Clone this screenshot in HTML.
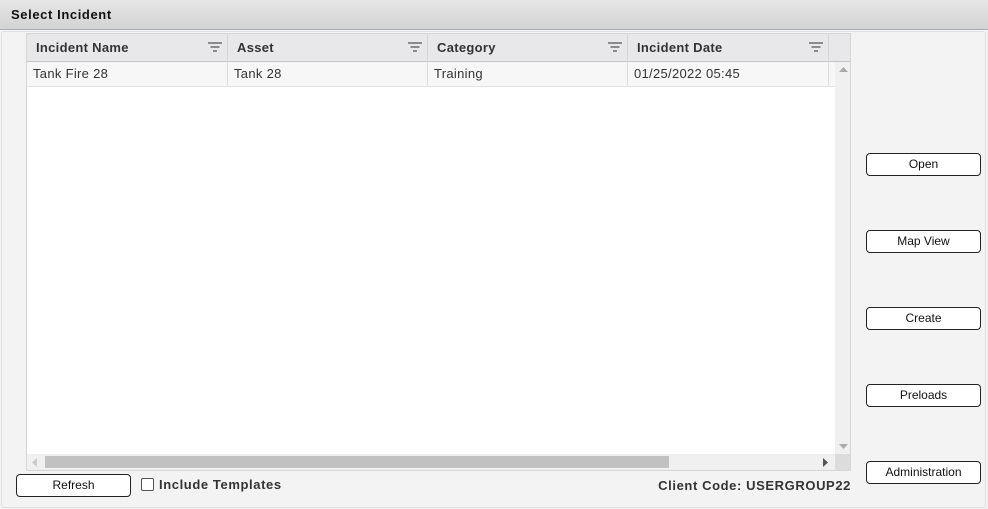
<!DOCTYPE html>
<html><head><style>
*{box-sizing:border-box;margin:0;padding:0}
body{width:988px;height:509px;background:#f3f3f3;font-family:"Liberation Sans",Verdana,sans-serif;position:relative;overflow:hidden;color:#222}
.hdr{position:absolute;left:0;top:0;width:988px;height:30px;background:linear-gradient(#e6e6e6,#d3d3d3);border-bottom:1px solid #a9adb5}
.hdr span{position:absolute;left:11px;top:7px;font-size:13px;font-weight:bold;color:#111;letter-spacing:0.6px}
.panel{position:absolute;left:1px;top:31px;width:985px;height:477px;border:1px solid #e0e0e0;border-radius:3px;background:#f3f3f3}
.grid{position:absolute;left:26px;top:33px;width:825px;height:438px;background:#fff;border:1px solid #d6d6d6;overflow:hidden}
.gh{position:absolute;left:0;top:0;width:825px;height:28px;background:#e8e8eb;border-bottom:1px solid #c4c4c8}
.gh div{position:absolute;top:0;height:28px;border-right:1px solid #d4d4d8;font-size:13px;font-weight:bold;line-height:27px;padding-left:9px;color:#333;letter-spacing:0.3px}
.fi{position:absolute;right:5px;top:8px;width:14px;height:10px}
.row{position:absolute;left:0;top:28px;width:808px;height:25px;background:#f7f7f7;border-bottom:1px solid #e4e4e4}
.row div{position:absolute;top:0;height:24px;border-right:1px solid #ddd;font-size:13px;line-height:24px;padding-left:6px;color:#333;letter-spacing:0.3px}
.vs{position:absolute;left:808px;top:28px;width:17px;height:392px;background:#f0f0f0}
.hs{position:absolute;left:0;top:420px;width:808px;height:17px;background:#f0f0f0}
.thumb{position:absolute;left:18px;top:2px;width:624px;height:12px;background:#c1c1c1}
.corner{position:absolute;left:808px;top:420px;width:17px;height:17px;background:#dcdcdc}
.btn{position:absolute;width:115px;height:23px;border:1px solid #222;border-radius:4px;background:#fff;font-size:12px;text-align:center;line-height:21px;color:#111}
.t{position:absolute;font-size:13px;font-weight:bold;color:#333;letter-spacing:0.6px}
</style></head><body>
<div class="hdr"><span>Select Incident</span></div>
<div class="panel"></div>
<div class="grid">
 <div class="gh">
  <div style="left:0;width:201px">Incident Name<svg class="fi" viewBox="0 0 14 10"><path d="M0 1h14M2.5 5h9M5 9h4" stroke="#555" stroke-width="1.3"/></svg></div>
  <div style="left:201px;width:200px">Asset<svg class="fi" viewBox="0 0 14 10"><path d="M0 1h14M2.5 5h9M5 9h4" stroke="#555" stroke-width="1.3"/></svg></div>
  <div style="left:401px;width:200px">Category<svg class="fi" viewBox="0 0 14 10"><path d="M0 1h14M2.5 5h9M5 9h4" stroke="#555" stroke-width="1.3"/></svg></div>
  <div style="left:601px;width:201px">Incident Date<svg class="fi" viewBox="0 0 14 10"><path d="M0 1h14M2.5 5h9M5 9h4" stroke="#555" stroke-width="1.3"/></svg></div>
 </div>
 <div class="row">
  <div style="left:0;width:201px">Tank Fire 28</div>
  <div style="left:201px;width:200px">Tank 28</div>
  <div style="left:401px;width:200px">Training</div>
  <div style="left:601px;width:201px">01/25/2022 05:45</div>
 </div>
 <div class="vs"><svg style="position:absolute;left:4px;top:5px" width="9" height="6"><path d="M0 5L4.5 0L9 5Z" fill="#aaa"/></svg><svg style="position:absolute;left:4px;top:382px" width="9" height="6"><path d="M0 0L4.5 5L9 0Z" fill="#aaa"/></svg></div>
 <div class="hs"><svg style="position:absolute;left:5px;top:4px" width="5" height="9"><path d="M5 0L0 4.5L5 9Z" fill="#ccc"/></svg><div class="thumb"></div><svg style="position:absolute;left:796px;top:4px" width="5" height="9"><path d="M0 0L5 4.5L0 9Z" fill="#555"/></svg></div>
 <div class="corner"></div>
</div>
<div class="btn" style="left:866px;top:153px">Open</div>
<div class="btn" style="left:866px;top:230px">Map View</div>
<div class="btn" style="left:866px;top:307px">Create</div>
<div class="btn" style="left:866px;top:384px">Preloads</div>
<div class="btn" style="left:866px;top:461px">Administration</div>
<div class="btn" style="left:16px;top:474px">Refresh</div>
<div style="position:absolute;left:141px;top:478px;width:13px;height:13px;border:1px solid #555;border-radius:2px;background:#fff"></div>
<div class="t" style="left:159px;top:477px">Include Templates</div>
<div class="t" style="right:137px;top:478px">Client Code: USERGROUP22</div>
</body></html>
